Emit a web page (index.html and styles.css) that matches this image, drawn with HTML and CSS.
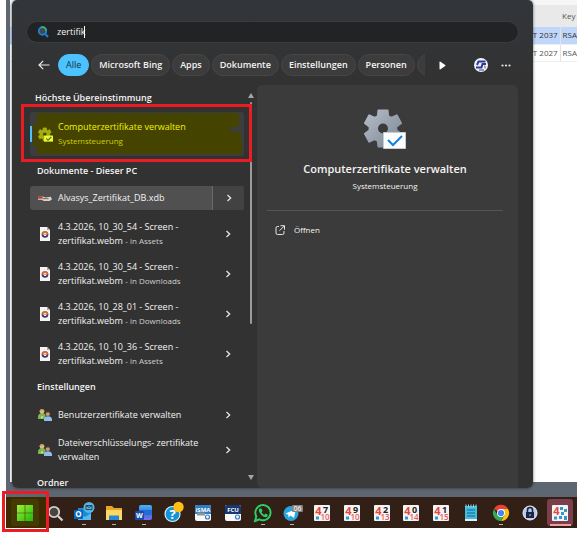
FILE: index.html
```html
<!DOCTYPE html>
<html lang="de">
<head>
<meta charset="utf-8">
<title>Suche</title>
<link rel="stylesheet" href="styles.css">
</head>
<body>
<svg class="defs" aria-hidden="true">
  <defs>
    <linearGradient id="steel" x1="0" y1="0" x2="1" y2="1"><stop offset="0" stop-color="#b4bdc8"/><stop offset="1" stop-color="#7d8794"/></linearGradient>
    <linearGradient id="green" x1="0" y1="0" x2="1" y2="1"><stop offset="0" stop-color="#a2ee38"/><stop offset="1" stop-color="#1fb90a"/></linearGradient>
    <linearGradient id="word" x1="0" y1="0" x2="0" y2="1"><stop offset="0" stop-color="#49b4f5"/><stop offset=".5" stop-color="#2b7ae0"/><stop offset="1" stop-color="#7b6df0"/></linearGradient>
    <path id="gear-shape" fill-rule="evenodd" stroke-width="2" stroke-linejoin="round" d="M13.9 7 14.400 1.500H23.600L24.100 7 27.300 8.900 32.700 6.300 37 14.300 32.400 17.600V21.400L37 24.700 32.700 32.700 27.300 30.100 24.100 32 23.600 37.500H14.400L13.900 32 10.700 30.100 5.300 32.700 1 24.700 5.600 21.400V17.600L1 14.300 5.300 6.300 10.700 8.900zM19 13.500a6 6 0 1 0 0 12 6 6 0 0 0 0-12z"/>
    <symbol id="chevron" viewBox="0 0 8 8"><path d="M2.5 1 5.700 4 2.500 7" fill="none" stroke="#e4e4e4" stroke-width="1.300"/></symbol>
    <symbol id="media" viewBox="0 0 10 14"><path d="M0 0h7l3 3v11H0z" fill="#f4f4f4"/><path d="M7 0v3h3z" fill="#aaa"/><circle cx="5" cy="7.500" r="3.300" fill="#45315c"/><path d="M1.700 7.500a3.300 3.300 0 0 1 6.600 0" fill="#dc6d32"/><circle cx="5" cy="7.500" r="1.500" fill="#fff"/><circle cx="5" cy="7.500" r=".6" fill="#345"/></symbol>
    <symbol id="people" viewBox="0 0 14 13">
      <path d="M0 10.500V7q1-2.500 4-2.500T7.500 7v3.500z" fill="#7db64c"/><circle cx="4" cy="3" r="2.300" fill="#dcb98a"/><path d="M1.500 3.500C1-.5 7-.5 6.500 3.500L5.500 2H3z" fill="#c6a24a"/>
      <path d="M6 12.500V10q1-2.200 4-2.200t4 2.200v2.500z" fill="#8fbdf0"/><circle cx="9.800" cy="5.300" r="2.200" fill="#c99b72"/><path d="M7.500 5.500C7 1.500 12.500 1.500 12 5.500L11 4H8.500z" fill="#4d3524"/><path d="M3 8.500l1 2 1-3z" fill="#eef5e0"/>
    </symbol>
  </defs>
</svg>

<div class="desktop">
  <div class="cert-window">
    <table class="cert-table">
      <thead><tr><th></th><th>Key</th></tr></thead>
      <tbody>
        <tr class="selected"><td>T 2037</td><td>RSA</td></tr>
        <tr><td>T 2027</td><td>RSA</td></tr>
      </tbody>
    </table>
  </div>

  <main class="search-panel">
    <label class="search-box">
      <svg class="search-icon" viewBox="0 0 12 12"><circle cx="5.500" cy="5" r="3.800" fill="#4c4742" stroke="#1686dd" stroke-width="1.700"/><path d="M4 1.500A3.800 3.800 0 0 1 9.300 5" fill="none" stroke="#35b17c" stroke-width="1.700"/><path d="M8.300 8l2.700 3" stroke="#1580dc" stroke-width="2"/></svg>
      <input type="text" value="zertifik" aria-label="Suche">
      <span class="caret"></span>
    </label>

    <nav class="filters">
      <button class="back" aria-label="Zurück"><svg viewBox="0 0 12 10"><path d="M11.500 5H1M5.200.800 1 5l4.200 4.200" fill="none" stroke="#e8e8e8" stroke-width="1.200"/></svg></button>
      <div class="chips">
        <button class="chip active">Alle</button>
        <button class="chip">Microsoft Bing</button>
        <button class="chip">Apps</button>
        <button class="chip">Dokumente</button>
        <button class="chip">Einstellungen</button>
        <button class="chip">Personen</button>
        <button class="chip">O</button>
      </div>
      <button class="next" aria-label="Weiter"><svg viewBox="0 0 7 9"><path d="M.5 1.200Q.5.200 1.500.7L6.200 4q.6.500 0 1L1.500 8.300Q.5 8.800.5 7.800z" fill="#fff"/></svg></button>
      <button class="account" aria-label="Konto"><svg viewBox="0 0 14 14"><circle cx="7" cy="7" r="7" fill="#f2f3f7"/><path d="M11.500 3.500H4.500L3 7M2 9.500h5.500L8.500 6H12" fill="none" stroke="#2b3a9b" stroke-width="2"/><path d="M5 12h5" stroke="#2b3a9b"/><path d="M10.500 7.500l1 3" stroke="#b88b70" stroke-width="1.500"/></svg></button>
      <button class="more" aria-label="Mehr"><svg viewBox="0 0 10 3"><circle cx="1.500" cy="1.500" r="1.100"/><circle cx="5" cy="1.500" r="1.100"/><circle cx="8.500" cy="1.500" r="1.100"/></svg></button>
    </nav>

    <div class="content">
      <section class="results">
        <h2 class="first">Höchste Übereinstimmung</h2>
        <a class="best" href="#">
          <svg class="marker" viewBox="0 0 214 44" preserveAspectRatio="none"><path d="M7 1h202v14h-8v5h10v8h1v14H7v-8H3V12h4z" fill="#444300"/></svg>
          <svg class="best-icon" viewBox="0 0 42 40"><use href="#gear-shape" fill="#a6ad10" stroke="#a6ad10"/><path d="M17 23h25v17H17z" fill="#f1f52c"/><path d="M23 31l5 5 9-9" fill="none" stroke="#33843a" stroke-width="3"/></svg>
          <span class="best-text"><strong>Computerzertifikate verwalten</strong><small>Systemsteuerung</small></span>
          <span class="callout"></span>
        </a>
        <h2>Dokumente - Dieser PC</h2>
        <div class="row highlighted">
          <svg class="row-icon file" viewBox="0 0 12 7"><path d="M0 2h4l2 1 5-.5 1 2-2 1.500H5L3 5H0z" fill="#d9d2ca"/><path d="M0 2h4v2H0z" fill="#b13b2b"/><path d="M4 4h5" stroke="#8a7466"/></svg>
          <a href="#">Alvasys_Zertifikat_DB.xdb</a>
          <button aria-label="Details"><svg><use href="#chevron"/></svg></button>
        </div>
        <div class="row"><svg class="row-icon media"><use href="#media"/></svg><a href="#">4.3.2026, 10_30_54 - Screen - zertifikat.webm <small>- in Assets</small></a><button aria-label="Details"><svg><use href="#chevron"/></svg></button></div>
        <div class="row"><svg class="row-icon media"><use href="#media"/></svg><a href="#">4.3.2026, 10_30_54 - Screen - zertifikat.webm <small>- in Downloads</small></a><button aria-label="Details"><svg><use href="#chevron"/></svg></button></div>
        <div class="row"><svg class="row-icon media"><use href="#media"/></svg><a href="#">4.3.2026, 10_28_01 - Screen - zertifikat.webm <small>- in Downloads</small></a><button aria-label="Details"><svg><use href="#chevron"/></svg></button></div>
        <div class="row"><svg class="row-icon media"><use href="#media"/></svg><a href="#">4.3.2026, 10_10_36 - Screen - zertifikat.webm <small>- in Assets</small></a><button aria-label="Details"><svg><use href="#chevron"/></svg></button></div>
        <h2>Einstellungen</h2>
        <div class="row single"><svg class="row-icon people"><use href="#people"/></svg><a href="#">Benutzerzertifikate verwalten</a><button aria-label="Details"><svg><use href="#chevron"/></svg></button></div>
        <div class="row"><svg class="row-icon people"><use href="#people"/></svg><a href="#">Dateiverschlüsselungs- zertifikate verwalten</a><button aria-label="Details"><svg><use href="#chevron"/></svg></button></div>
        <h2>Ordner</h2>
      </section>
      <div class="scrollbar">
        <svg viewBox="0 0 6 5"><path d="M3 0l3 5H0z" fill="#a5a5a5"/></svg>
        <span class="thumb"></span>
        <svg viewBox="0 0 6 5"><path d="M0 0h6L3 5z" fill="#a5a5a5"/></svg>
      </div>
      <section class="detail">
        <svg class="detail-icon" viewBox="0 0 42 40"><use href="#gear-shape" fill="url(#steel)" stroke="url(#steel)"/><path d="M19.500 23.500h22v16h-22z" fill="#fcfdff" stroke="#c8ccd2"/><path d="M24 31l5 5 9-9" fill="none" stroke="#1380dc" stroke-width="2"/></svg>
        <h1>Computerzertifikate verwalten</h1>
        <p>Systemsteuerung</p>
        <hr>
        <button class="open"><svg viewBox="0 0 10 10"><path d="M4 1.500H2.500Q1 1.500 1 3v5q0 1.500 1.500 1.500h5Q9 9.500 9 8V6M5.500.7h4v4M9.300.900 4.500 5.700" fill="none" stroke="#e5e5e5"/></svg>Öffnen</button>
      </section>
    </div>
  </main>
</div>

<footer class="taskbar">
  <button class="start" aria-label="Start"><svg viewBox="0 0 20 20"><path d="M2 2h7.700v7.700H2zM10.300 2H18v7.700h-7.700zM2 10.300h7.700V18H2zM10.300 10.300H18V18h-7.700z" fill="url(#green)"/></svg><span class="callout"></span></button>
  <button aria-label="Suchen"><svg viewBox="0 0 20 20"><circle cx="9" cy="9" r="5.200" fill="#4a4441" stroke="#d4d1cf" stroke-width="1.800"/><path d="M13 13l4.500 4.500" stroke="#d4d1cf" stroke-width="2.200"/></svg></button>
  <button class="running" aria-label="Outlook"><svg viewBox="0 0 20 20"><path d="M4 5h13v12H4z" fill="#168bdc"/><path d="M4 10l7 4 6-4v7H4z" fill="#56b9f2"/><path d="M0 7h9v9H0z" fill="#0c66c0"/><text x="4.500" y="14" class="w8">O</text><circle cx="15" cy="4.500" r="5.500" fill="#59b5dd"/><path d="M12 2.500h6v4h-6zl3 2 3-2" fill="none" stroke="#173f56" stroke-width=".9"/></svg></button>
  <button class="running" aria-label="Explorer"><svg viewBox="0 0 20 20"><path d="M2 3h6l2 2h8v12H2z" fill="#e9a526"/><path d="M2 7h16v10H2z" fill="#ffd767"/><path d="M5 12.500h10V17H5z" fill="#2588d5"/></svg></button>
  <button class="running" aria-label="Word"><svg viewBox="0 0 20 20"><rect x="5" y="2" width="13" height="15" rx="2" fill="url(#word)"/><path d="M5 7h13v5H5z" fill="#2769d5"/><rect x="1" y="8" width="9" height="9" rx="1" fill="#174aa9"/><text x="5.500" y="15" class="w7">W</text></svg></button>
  <button aria-label="Hilfe"><svg viewBox="0 0 20 20"><circle cx="8.500" cy="11" r="7.500" fill="#1594d5" stroke="#d9edf7" stroke-width="1.200"/><text x="8.500" y="15.500" class="w13">?</text><circle cx="14.500" cy="4" r="5.200" fill="#ffbf14"/></svg></button>
  <button aria-label="iSMA"><svg viewBox="0 0 20 20"><rect x="2" y="2" width="16" height="16" rx="2" fill="#f6f8fa"/><path d="M2 11V4q0-2 2-2h12q2 0 2 2v7z" fill="#2b7dc4"/><text x="10" y="8.500" class="w6">iSMA</text><path d="M4 9.500h8v3H4z" fill="#8d9399"/><circle cx="14.500" cy="14" r="2" fill="none" stroke="#3b7cc0" stroke-width="1.200"/></svg></button>
  <button aria-label="FCU"><svg viewBox="0 0 20 20"><rect x="2" y="2" width="16" height="16" rx="2" fill="#f6f8fa"/><path d="M2 11V4q0-2 2-2h12q2 0 2 2v7z" fill="#17386e"/><text x="10" y="9" class="w6">FCU</text><circle cx="14.500" cy="14" r="2" fill="none" stroke="#3b7cc0" stroke-width="1.200"/></svg></button>
  <button class="running" aria-label="WhatsApp"><svg viewBox="0 0 20 20"><path d="M2 18l1.300-4.700a7.600 7.600 0 1 1 3 3z" fill="none" stroke="#27d366" stroke-width="1.900"/><path d="M6.500 5.500h2l1 2.500-1 1.200q1 1.900 2.800 2.700l1.200-1.300 2.300 1.200q.2 2-2 2.500-2 0-4.500-2.300Q5.700 9.400 5.800 7.300q0-1 .7-1.800z" fill="#27d366"/></svg></button>
  <button class="running" aria-label="Telegram"><svg viewBox="0 0 20 20"><circle cx="9" cy="10.500" r="7.500" fill="#27a5df"/><path d="M3.500 10.500 14 6l-2 9-3.500-2.500L6.500 14.500 6.300 11.700z" fill="#fff"/><rect x="10" y="2" width="11" height="7" rx="1" fill="#85817f"/><text x="15.500" y="8" class="w7 soft">06</text></svg></button>
  <button aria-label="47"><svg class="num" viewBox="0 0 20 20"><rect x="2" y="2" width="16" height="16" rx="1"/><text x="6.500" y="11.500" class="four">4</text><text x="13.500" y="10" class="black">7</text><text x="13" y="17" class="pink">10</text><path d="M4 13.500h3v3H4z" class="dot"/></svg></button>
  <button aria-label="49"><svg class="num" viewBox="0 0 20 20"><rect x="2" y="2" width="16" height="16" rx="1"/><text x="6.500" y="11.500" class="four">4</text><text x="13.500" y="10" class="black">9</text><text x="13" y="17" class="pink">10</text><path d="M4 13.500h3v3H4z" class="dot"/></svg></button>
  <button aria-label="42"><svg class="num" viewBox="0 0 20 20"><rect x="2" y="2" width="16" height="16" rx="1"/><text x="6.500" y="11.500" class="four">4</text><text x="13.500" y="10" class="black">2</text><text x="13" y="17" class="pink">13</text><path d="M4 13.500h3v3H4z" class="dot"/></svg></button>
  <button aria-label="40"><svg class="num" viewBox="0 0 20 20"><rect x="2" y="2" width="16" height="16" rx="1"/><text x="6.500" y="11.500" class="four">4</text><text x="13.500" y="10" class="black">0</text><text x="13" y="17" class="pink">14</text><path d="M4 13.500h3v3H4z" class="dot"/></svg></button>
  <button aria-label="41"><svg class="num" viewBox="0 0 20 20"><rect x="2" y="2" width="16" height="16" rx="1"/><text x="6.500" y="11.500" class="four">4</text><text x="13.500" y="10" class="black">1</text><text x="13" y="17" class="pink">15</text><path d="M4 13.500h3v3H4z" class="dot"/></svg></button>
  <button aria-label="Editor"><svg viewBox="0 0 20 20"><path d="M4 3h12v14H4z" fill="#42bbdd"/><path d="M4 16h12v2H4z" fill="#e7eef2"/><path d="M6 7h8M6 10h8M6 13h8" stroke="#17678c" stroke-width="1.200"/><path d="M5 1.500v3M7.500 1.500v3M10 1.500v3M12.500 1.500v3M15 1.500v3" stroke="#93dbec"/></svg></button>
  <button class="running" aria-label="Chrome"><svg viewBox="0 0 20 20"><path d="M10 10 3 6a8 8 0 0 1 14 0z" fill="#ea4335"/><path d="M10 10V6h7a8 8 0 0 1-7 12l3.500-6z" fill="#fbc116"/><path d="M10 10l3.500 2L10 18A8 8 0 0 1 3 6l3.500 6z" fill="#34a853"/><circle cx="10" cy="10" r="4" fill="#fff"/><circle cx="10" cy="10" r="3.100" fill="#4285f4"/></svg></button>
  <button aria-label="Tresor"><svg viewBox="0 0 20 20"><circle cx="10" cy="10" r="7" fill="#b9cbf0" stroke="#e8eefb"/><path d="M7.500 9V7a2.500 2.500 0 0 1 5 0v2" fill="none" stroke="#1c2644" stroke-width="1.600"/><rect x="6" y="9" width="8" height="6" fill="#1c2644"/><path d="M10 11v2" stroke="#b9cbf0"/></svg></button>
  <button class="current" aria-label="4"><svg class="num" viewBox="0 0 20 20"><rect x="2" y="2" width="16" height="16" rx="1"/><text x="6.500" y="11.500" class="four">4</text><path d="M10 4h3v3h-3zM14 6h3v3h-3zM11 9h3v3h-3zM14 13h3v4h-3zM9 13h3v3H9zM4 13.500h3v3H4z" class="dot"/></svg></button>
</footer>
</body>
</html>
```
FILE: styles.css
```css
* { box-sizing: border-box; }

body {
  margin: 0;
  min-height: 100vh;
  background: #fff;
  color: #f3f3f3;
  font-family: "Open Sans", "Noto Sans", sans-serif;
  font-size: 9px;
  line-height: 14px;
}

button, input { font: inherit; color: inherit; border: 0; padding: 0; background: none; }
button { display: flex; align-items: center; justify-content: center; }
a { color: inherit; text-decoration: none; }
h1, h2, p { margin: 0; font-weight: 600; }
svg { display: block; flex: none; }
.defs { position: absolute; width: 0; height: 0; }

.desktop {
  position: relative;
  margin-left: 6px;
  padding: 0 44px 9px 6px;
  background: #5d6671;
}

/* Window behind the search panel */
.cert-window {
  position: absolute;
  inset: 0 0 15px 4px;
  padding-top: 5px;
  background: linear-gradient(#f6f6f6 5px, #fff 5px);
}
.cert-table {
  width: 100%;
  border-collapse: collapse;
  color: #555;
  font: 8px/16px "Open Sans", sans-serif;
}
.cert-table th { height: 22px; background: #e9e9e9; font-weight: 400; text-align: left; }
.cert-table td { height: 17px; border-bottom: 1px solid #eee; }
.cert-table td:first-child { text-align: right; border-right: 1px solid #e2e2e2; }
.cert-table th, .cert-table td { padding: 0 2px; }
.cert-table th:last-child, .cert-table td:last-child { width: 16px; padding: 0 0 0 2px; }
.cert-table .selected { background: #c0d6fb; color: #333; }

/* Search panel */
.search-panel {
  position: relative;
  padding: 22px 15px 0;
  border-radius: 5px 5px 6px 6px;
  background: linear-gradient(#32353a, #323232 85px);
  box-shadow: 0 0 3px #0009;
}
.search-box {
  position: relative;
  display: flex;
  align-items: center;
  gap: 8px;
  height: 20px;
  padding: 0 10px;
  border-radius: 10px;
  background: #222325;
  box-shadow: 0 0 0 1px #3a3b3d;
}
.search-icon { width: 12px; height: 12px; }
.search-box input { flex: 1; min-width: 0; outline: 0; }
.caret { position: absolute; left: 57px; top: 4px; width: 1px; height: 12px; background: #fff; }

.filters { display: flex; align-items: center; height: 22px; margin: 12px 0 9px; padding: 0 7px 0 10px; }
.back { width: 13px; margin-right: 8px; }
.back svg { width: 12px; height: 10px; }
.chips { display: flex; flex: 1; gap: 2px; min-width: 0; height: 22px; overflow: hidden; }
.chip {
  flex: none;
  height: 22px;
  padding: 0 7px;
  border: 1px solid #464646;
  border-radius: 11px;
  background: #3c3c3c;
  font-weight: 600;
}
.chip.active { border-color: #4cc2ff; background: #4cc2ff; color: #12303f; font-weight: 500; }
.next { width: 7px; margin: 0 28px 0 14px; }
.next svg { width: 7px; height: 9px; }
.account { margin-right: 13px; }
.account svg { width: 14px; height: 14px; }
.more svg { width: 10px; height: 3px; fill: #e8e8e8; }

.content { display: flex; height: 403px; }
.results { width: 214px; margin-left: 3px; clip-path: inset(0 -10px); }
.results h2 { height: 26px; padding-left: 7px; font-size: 9px; line-height: 26px; }
.results h2.first { margin-bottom: 1px; padding-left: 5px; }

.best {
  display: flex;
  align-items: center;
  position: relative;
  height: 44px;
  margin-bottom: 2px;
  padding-left: 8px;
  border-radius: 3px;
  background: #3d3d3d;
}
.best::before { content: ""; position: absolute; z-index: 1; left: 0; top: 14px; width: 2px; height: 16px; background: #4cc2ff; }
.marker { position: absolute; inset: 0; width: 100%; height: 100%; }
.best-icon { position: relative; width: 15px; height: 15px; margin-right: 5px; }
.best-text { position: relative; color: #f2f200; }
.best-text strong, .best-text small { display: block; font-weight: 500; }
.best-text small { font-size: 8px; color: #cfcf00; }

/* Red annotation frames */
.callout { position: absolute; z-index: 2; border: 3px solid #ec1c24; pointer-events: none; }
.best .callout { inset: -8px -8px -6px -9px; }

.row { display: flex; align-items: center; height: 40px; padding-left: 8px; border-radius: 3px; }
.row.single { height: 30px; }
.row.highlighted { height: 24px; margin: 2px 0 4px; background: #505050; }
.row a { flex: 1; min-width: 0; font-weight: 500; }
.row small { font-size: 8px; line-height: 12px; color: #d0d0d0; }
.row button { width: 32px; align-self: stretch; }
.row.highlighted button { border-left: 1px solid #6a6a6a; border-radius: 0 3px 3px 0; background: #424242; }
.row button svg { width: 8px; height: 8px; }
.row-icon { width: 14px; height: 14px; margin-right: 6px; }

.scrollbar { display: flex; flex-direction: column; align-items: center; width: 6px; margin: 0 3px 0 4px; padding: 8px 0; }
.scrollbar svg { width: 6px; height: 5px; }
.thumb { width: 2px; height: 222px; margin: 4px 0 auto; border-radius: 1px; background: #9b9b9b; }

.detail {
  display: flex;
  flex: 1;
  flex-direction: column;
  align-items: center;
  padding: 24px 15px 0 10px;
  border-radius: 5px 5px 0 5px;
  background: #3b3b3b;
}
.detail-icon { width: 42px; height: 40px; }
.detail h1 { margin-top: 11px; font-size: 11px; line-height: 18px; font-weight: 600; }
.detail p { margin-top: 2px; font-size: 8px; line-height: 12px; font-weight: 400; }
.detail hr { width: 100%; height: 1px; margin: 18px 0 12px; border: 0; background: #555; }
.open { align-self: flex-start; gap: 9px; margin-left: 8px; font-size: 8px; }
.open svg { width: 10px; height: 10px; }

/* Taskbar */
.taskbar {
  display: grid;
  grid-template-columns: repeat(19, 1fr);
  height: 31px;
  margin-left: 6px;
  padding: 0 2px 0 4px;
  background: #321f15;
}
.taskbar button { position: relative; }
.taskbar svg { width: 20px; height: 20px; overflow: visible; }
.taskbar .running::after, .taskbar .current::after {
  content: "";
  position: absolute;
  bottom: 3px;
  width: 4px;
  height: 1px;
  background: #b9b3b0;
}
.taskbar .current::before { content: ""; position: absolute; inset: 2px; border-radius: 3px; background: #7b3f4b; }
.taskbar .current svg { position: relative; }
.taskbar .current::after { width: 21px; bottom: 2px; height: 2px; background: #f29aa6; }
.taskbar .start { z-index: 1; }
.start::before { content: ""; position: absolute; inset: 0 -6px 0 -4px; background: #3a2c00; }
.start::after { content: ""; position: absolute; inset: 2px 1px; border-radius: 3px; background: #463a04; }
.start svg { position: relative; z-index: 1; }
.start .callout { inset: -6px -9px -4px -8px; }

.taskbar text { font-family: "Open Sans", sans-serif; font-weight: 700; text-anchor: middle; fill: #fff; }
.w6 { font-size: 6px; }
.w7 { font-size: 7px; }
.w8 { font-size: 8px; }
.w13 { font-size: 13px; }
.taskbar .soft { fill: #eceae9; font-weight: 600; }
.taskbar .num rect { fill: #f4f4f4; }
.taskbar .num .four { font-size: 11px; fill: #e4473f; }
.taskbar .num .black { font-size: 9px; fill: #222; }
.taskbar .num .pink { font-size: 8px; font-weight: 600; fill: #ee5a58; }
.taskbar .num .dot { fill: #3398cf; }
```
